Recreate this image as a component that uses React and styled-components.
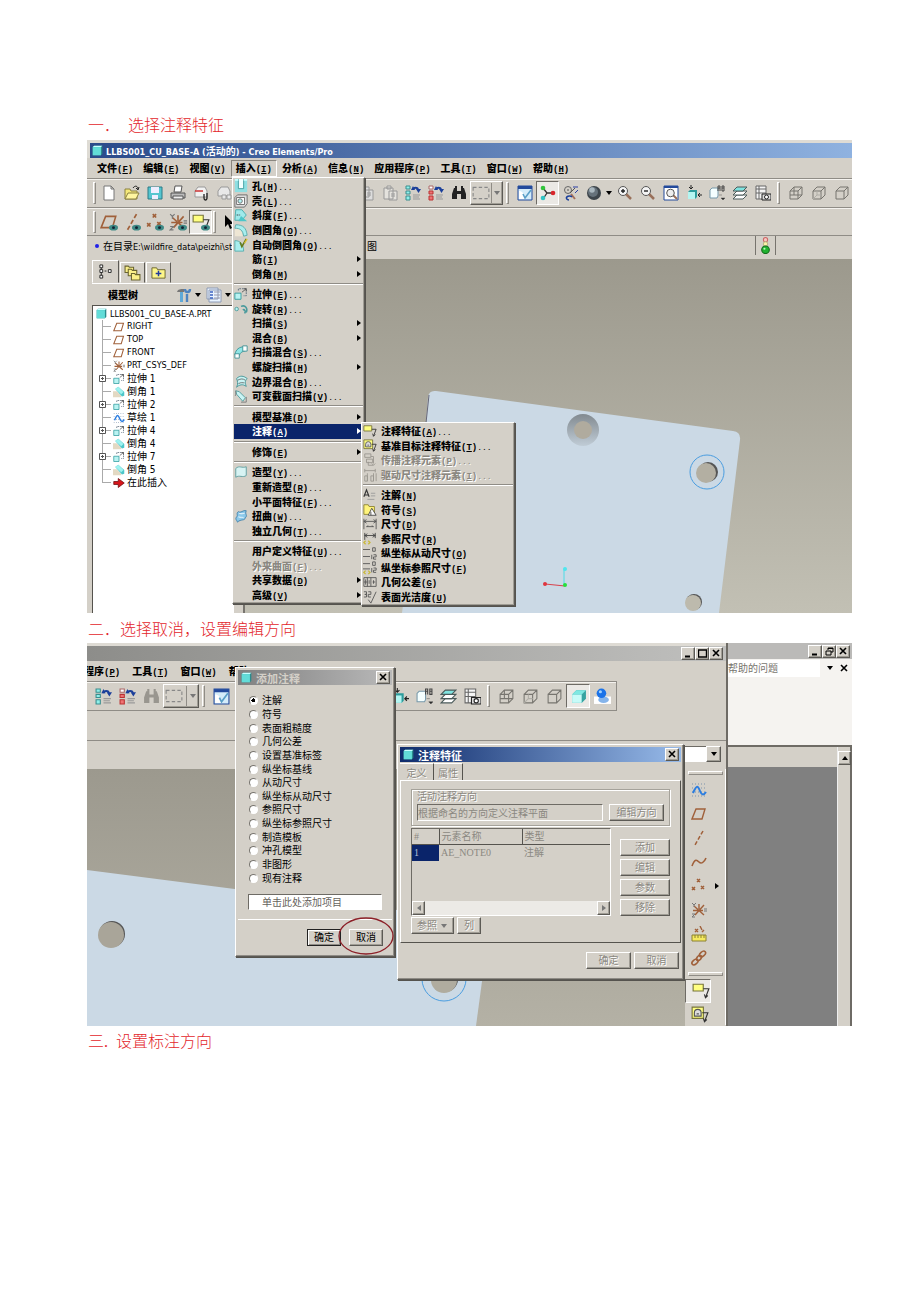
import React, { useState } from "react";
import styled, { createGlobalStyle, css } from "styled-components";

const FACE = "#d4d0c8";
const HAN = '"DejaVu Sans Condensed", "Noto Sans CJK SC", sans-serif';

const GlobalStyle = createGlobalStyle`
  * {
    box-sizing: border-box;
  }

  body {
    margin: 0;
    background: #fff;
    color: #000;
    font-family: ${HAN};
    font-size: 10px;
  }

  button, input, select {
    margin: 0;
    padding: 0;
    border: 0;
    border-radius: 0;
    background: none;
    color: inherit;
    font: inherit;
  }

  svg {
    display: block;
    flex: none;
  }
`;

/* ---------- icons, all on a 16 x 16 grid ---------- */

const brown = "#a0603a";

const box3d = (
  <path d="M2 6h8v8H2zM2 6l4-4h8v8l-4 4M10 6l4-4" fill="none" stroke="#77756f" />
);
const eye = (
  <g>
    <ellipse cx="12" cy="13" rx="4" ry="2.5" fill="#3f8a86" />
    <circle cx="12" cy="13" r="1.3" fill="#123" />
  </g>
);
const plane = <path d="M5 3h9l-3 10H1z" fill="none" stroke={brown} strokeWidth="1.4" />;
const axis = <path d="M12 1L4 15" stroke={brown} strokeWidth="1.5" strokeDasharray="4 2" />;
const points = (
  <path
    d="M6 1l3 3m0-3L6 4M1 9l3 3m0-3l-3 3M10 8l3 3m0-3l-3 3"
    stroke={brown}
    strokeWidth="1.5"
  />
);
const csys = (
  <g fill="none">
    <path d="M3 4l10 9M13 3L4 13M2 8.500h10M8 2v5" stroke={brown} strokeWidth="1.4" />
    <path d="M1 1l2 2 2-2M3 3v2M1 12h3l-3 3h3M13 7h3M13 9h3" stroke="#777" />
  </g>
);
const noteFlag = (
  <g>
    <path d="M1 2h9v6H1z" fill="#ffff80" stroke="#77753a" />
    <path d="M10 6h5l-3 8m-1-3l1 3 2-2" fill="none" stroke="#333" />
  </g>
);
const targetFlag = (
  <g>
    <path d="M1 1h10v10H1z" fill="#ffff80" stroke="#77753a" />
    <path d="M3 6a3 3 0 0 1 6 0v3H3zM5 7h2" fill="#ddd" stroke="#555" />
    <path d="M10 6h5l-3 8m-1-3l1 3 2-2" fill="none" stroke="#333" />
  </g>
);
const lens = (
  <g>
    <path d="M9 9l5 5" stroke="#99705a" strokeWidth="2.5" />
    <circle cx="6" cy="6" r="4.500" fill="#f4f4f4" stroke="#555" />
  </g>
);
const cycle = (
  <g>
    <path d="M8 5c0-3 5-3 5 0" fill="none" stroke="#1b3f9a" strokeWidth="1.8" />
    <path d="M11 4h5l-2.500 4zM6 5h4L8 1z" fill="#1b3f9a" />
    <path d="M8 10h7M8 12h6M8 14h7" stroke="#999" />
  </g>
);
const binoculars = (
  <path d="M3 3h3v3h4V3h3l2 6v5h-5V9H6v5H1V9z M4 1h2v2H4zM10 1h2v2h-2z" />
);
const extrude = (
  <g>
    <path d="M5 4V2h9v8h-3" fill="none" stroke="#567" strokeDasharray="2 1" />
    <path d="M9 6l5-4M11 2h3v3" fill="none" stroke="#555" />
    <path d="M1 7h7v7H1z" fill="#b9f3f2" stroke="#2e9a9c" />
  </g>
);

const ICONS = {
  cube: (
    <g>
      <path d="M1 3l2-2h12v12l-2 2H1z" fill="#2b8b8c" />
      <path d="M1 3h12v12H1z" fill="#62dcd8" />
      <path d="M1 3l2-2h12l-2 2z" fill="#c6ffff" />
    </g>
  ),
  file: <path d="M3 1h7l3 3v11H3zM10 1v3h3" fill="#fff" stroke="#777" />,
  open: (
    <g>
      <path d="M1 4h5l1 2h6v8H1z" fill="#f5e97a" stroke="#8a8040" />
      <path d="M1 14l3-6h11l-3 6z" fill="#fff6a0" stroke="#8a8040" />
      <path d="M9 3c2-3 5-2 5 1m-2-1l2 2 1-3" fill="none" stroke="#222" />
    </g>
  ),
  save: (
    <g>
      <path d="M1 2h14v12H1z" fill="#55c5cf" stroke="#2d7b86" />
      <path d="M4 2h8v6H4zM5 10h6v4H5z" fill="#eef" />
    </g>
  ),
  print: (
    <g stroke="#555">
      <path d="M5 1h7l-1 6H4z" fill="#fff" />
      <path d="M1 8h14v5H1z" fill="#bbb" />
      <path d="M3 11h10v3H3z" fill="#eee" />
    </g>
  ),
  mail: (
    <g>
      <path d="M2 6l3-4h7l2 4v6H2z" fill="#f2f2f2" stroke="#999" />
      <path d="M2 6h8" stroke="#c33" strokeWidth="1.5" />
      <path d="M11 9v4a1.500 2 0 0 0 3 0V8" fill="none" stroke="#222" strokeWidth="1.3" />
    </g>
  ),
  link: (
    <g fill="#e8e8e8" stroke="#999">
      <path d="M2 6l3-4h7l2 4v5H2z" />
      <path d="M6 10h4v4H6zM11 10h4v4h-4z" />
    </g>
  ),
  copy: <path d="M2 2h8v10H2zM6 5h8v10H6zM8 8h4M8 10h4" fill="#ddd" stroke="#999" />,
  paste: <path d="M2 3h9v11H2zM5 1h4v3H5zM7 6h8v9H7zM9 9h4M9 11h4" fill="#e4e2dd" stroke="#999" />,
  regen: (
    <g>
      <path d="M1 1h4v3H1zM1 6h4v3H1zM1 11h4v4H1z" fill="#8ff0ea" stroke="#3b8d8e" />
      {cycle}
    </g>
  ),
  regenRed: (
    <g>
      <path d="M1 1h4v3H1z" fill="#fff" stroke="#a66" />
      <path d="M1 6h4v3H1zM1 11h4v4H1z" fill="#ef7373" stroke="#b33" />
      {cycle}
    </g>
  ),
  find: <g fill="#222">{binoculars}</g>,
  findOff: <g fill="#99968f">{binoculars}</g>,
  select: <path d="M1 3h14v10H1z" fill="none" stroke="#888" strokeDasharray="3 2" />,
  repaint: (
    <g>
      <path d="M1 1h14v14H1z" fill="#d4ecfa" stroke="#234a9c" />
      <path d="M1 1h14v3H1z" fill="#234a9c" />
      <path d="M2 14V6c3 0 5 2 6 8z" fill="#fff" />
      <path d="M6 9l2 4 6-8" fill="none" stroke="#5a9fc8" strokeWidth="1.600" />
    </g>
  ),
  spin: (
    <g>
      <path d="M3 3l4 5 7 0M7 8l-4 6" fill="none" stroke="#333" strokeWidth="1.3" />
      <circle cx="3" cy="3" r="2.300" fill="#32c43c" />
      <circle cx="13" cy="8" r="2.300" fill="#d8262c" />
      <circle cx="3" cy="13" r="2.300" fill="#32c4c4" />
    </g>
  ),
  orient: (
    <g fill="none">
      <circle cx="5" cy="5" r="3.500" stroke="#666" />
      <path d="M4 5h2M7 8l5-5" stroke="#555" />
      <path d="M10 2h5M15 5l-3 3" stroke="#2a3fa5" />
      <path d="M8 9l4 5" stroke="#a5705a" strokeWidth="2" />
      <path d="M9 12a3 2 0 1 0-3 3" stroke="#1b3f9a" strokeWidth="1.600" />
    </g>
  ),
  ball: (
    <g>
      <circle cx="8" cy="8" r="7" fill="#3d454b" />
      <circle cx="7" cy="7" r="5" fill="#66727b" />
      <circle cx="6" cy="5" r="2.800" fill="#a9b7bf" />
    </g>
  ),
  zoomIn: <g>{lens}<path d="M4 6h4M6 4v4" stroke="#222" strokeWidth="1.400" /></g>,
  zoomOut: <g>{lens}<path d="M4 6h4" stroke="#222" strokeWidth="1.400" /></g>,
  refit: (
    <g>
      <path d="M1 1h14v14H1z" fill="#fff" stroke="#234a9c" />
      <path d="M1 1h14v2H1z" fill="#234a9c" />
      <path d="M10 10l4 4" stroke="#99705a" strokeWidth="2" />
      <circle cx="7.500" cy="8" r="3.800" fill="#eee" stroke="#555" />
    </g>
  ),
  view: (
    <g>
      <path d="M2 7l2-2h7v7l-2 2H2z" fill="#2c9c9c" />
      <path d="M2 7h7v7H2z" fill="#b4f5f1" />
      <path d="M5 0v4M3 2l2 2 2-2M16 10h-4M14 8l-2 2 2 2" fill="none" stroke="#222" />
    </g>
  ),
  saved: (
    <g>
      <path d="M1 5l2-2h6v8l-1 2H1z" fill="#f5ffff" stroke="#79a" />
      <path d="M9 6V1h2v5M9 3h2M13 1h2v5h-2zM13 3h2" fill="none" stroke="#444" />
      <path d="M10 10h3M12 13h4l-2 2z" fill="#222" stroke="#555" strokeWidth=".5" />
    </g>
  ),
  layers: (
    <g stroke="#4a5a5a">
      <path d="M1 14l4-4h10l-4 4z" fill="#fff" />
      <path d="M1 10l4-4h10l-4 4z" fill="#fff" />
      <path d="M1 6l4-4h10l-4 4z" fill="#7fe3df" />
    </g>
  ),
  manager: (
    <g>
      <path d="M1 1h10v13H1zM4 1v13M1 4h10M1 8h10" fill="#f4f4f4" stroke="#666" />
      <path d="M7 9h9v6H7z" fill="#ddd" stroke="#222" />
      <circle cx="11.500" cy="12" r="2" fill="#fff" stroke="#222" />
    </g>
  ),
  wire: <g>{box3d}<path d="M6 2v8H2M6 10h8" fill="none" stroke="#77756f" /></g>,
  hidden: <g>{box3d}<path d="M6 6v4l-4 4M6 10h4" fill="none" stroke="#b0aea7" /></g>,
  noHidden: box3d,
  shaded: (
    <g>
      <path d="M2 6l4-4h9v8l-4 4H2z" fill="#36a3a1" />
      <path d="M2 6h9v8H2z" fill="#c7fbf8" />
      <path d="M2 6l4-4h9l-4 4z" fill="#7fe8e2" />
    </g>
  ),
  render: (
    <g>
      <path d="M0 8h16v7H0z" fill="#fff" />
      <ellipse cx="9" cy="11" rx="5" ry="3" fill="#85b4ea" />
      <circle cx="7" cy="5" r="4.500" fill="#1a72e8" />
      <circle cx="6" cy="3.500" r="1.500" fill="#9cd0ff" />
    </g>
  ),
  plane,
  axis,
  points,
  csys,
  planeEye: <g>{plane}{eye}</g>,
  axisEye: <g>{axis}{eye}</g>,
  pointsEye: <g>{points}{eye}</g>,
  csysEye: <g>{csys}{eye}</g>,
  noteEye: <g>{noteFlag}{eye}</g>,
  cursor: <path d="M4 1v12l3-3 2 5 2-1-2-4h4z" fill="#000" />,
  note: noteFlag,
  target: targetFlag,
  light: (
    <g>
      <circle cx="8" cy="2.500" r="2" fill="#f6c6c0" stroke="#c66" />
      <circle cx="8" cy="6.500" r="2" fill="#fff3a8" stroke="#bb8" />
      <circle cx="8" cy="12" r="3.600" fill="#20b230" stroke="#156c1c" />
      <circle cx="7" cy="11" r="1" fill="#b9ffb9" />
    </g>
  ),
  modelTree: <path d="M2 1h3v3H2zM2 6h3v3H2zM2 12h3v3H2zM11 6h3v3h-3zM7 7.500h2M3.500 4v2M3.500 9v3" fill="#fff" stroke="#222" />,
  folders: (
    <g fill="#fbf08a" stroke="#6a6430">
      <path d="M1 2h3l1 1h4v5H1z" />
      <path d="M4 5h3l1 1h4v5H4z" />
      <path d="M7 9h3l1 1h4v5H7z" />
    </g>
  ),
  favorite: (
    <g>
      <path d="M1 3h5l1 2h8v9H1z" fill="#fdf68a" stroke="#6a6430" />
      <path d="M8 6v6M5 9h6" stroke="#223c9c" strokeWidth="1.600" />
    </g>
  ),
  hammer: (
    <g>
      <path d="M1 5c1-3 3-3 7-3v3H5z" fill="#777" />
      <path d="M4 5h3v10H4z" fill="#5fa9d8" />
      <path d="M11 15V7M9 2c0 4 5 4 5 0" fill="none" stroke="#4d83c0" strokeWidth="2.400" />
    </g>
  ),
  list: (
    <g>
      <path d="M1 1h11v11H1zM3 3h12v12H3z" fill="#e9f3ff" stroke="#8c9ab5" />
      <path d="M4 5h3M4 8h3M4 11h3" stroke="#3a62c0" strokeWidth="1.500" />
      <path d="M8 5h6M8 8h6M8 11h6" stroke="#99a" />
    </g>
  ),
  extrude,
  chamfer: (
    <g>
      <path d="M0 15V7h5l6 6v2z" fill="#e3d9c3" />
      <path d="M3 4l4-3 8 7v5l-3 1z" fill="#4cc6c9" />
      <path d="M3 4l4-3 7 7-3 3z" fill="#9ff2ef" />
    </g>
  ),
  sketch: (
    <g fill="none">
      <path d="M1 2h14M1 6h14M1 10h14M1 14h14" stroke="#7d93ab" strokeDasharray="1 2" />
      <path d="M2 11c4-9 5-7 7-2s4 4 6 1" stroke="#2b7de0" strokeWidth="2" />
    </g>
  ),
  insert: <path d="M1 6h6V2l8 6-8 6v-4H1z" fill="#d8161c" stroke="#6d0b0e" />,
  curve: <path d="M1 12c3-8 5-6 7-4s5 1 7-4" fill="none" stroke={brown} strokeWidth="1.600" />,
  ruler: (
    <g>
      <path d="M4 3l3 3m0-3L4 6M9 0l2 4M11 6l2-2" stroke={brown} strokeWidth="1.400" />
      <path d="M1 9h14v6H1zM4 9v3M7 9v3M10 9v3M13 9v3" fill="#f5ea60" stroke="#8a8030" />
    </g>
  ),
  chain: (
    <g fill="none" stroke={brown} strokeWidth="1.600">
      <ellipse cx="11.500" cy="4" rx="3.500" ry="2.200" transform="rotate(-40 11.500 4)" />
      <ellipse cx="8" cy="8" rx="3" ry="2" transform="rotate(-50 8 8)" />
      <ellipse cx="4" cy="12" rx="3.500" ry="2.200" transform="rotate(-40 4 12)" />
    </g>
  ),
  hole: (
    <g>
      <path d="M1 1h14v14H1z" fill="#8fdfe2" />
      <path d="M5 0v11h6V0" fill="#f2ffff" stroke="#3a9a9c" />
      <path d="M1 1h4M11 1h4" fill="none" stroke="#cff" strokeWidth="2" />
    </g>
  ),
  shell: (
    <g stroke="#666">
      <path d="M1 4l3-3h11v10l-3 4H1z" fill="#ddd" />
      <path d="M3 4h9v8H3z" fill="#fff" />
      <circle cx="7" cy="8" r="2.500" fill="#b5eff0" />
    </g>
  ),
  draft: (
    <g>
      <path d="M2 2h7l5 6-5 6H1z" fill="#9fe9ea" stroke="#4aa" />
      <path d="M8 9l7 6H5z" fill="#4cc6c9" />
      <path d="M3 8h4" stroke="#333" strokeDasharray="2 1" />
    </g>
  ),
  round: (
    <g>
      <path d="M1 6c7-1 8 3 9 9H1z" fill="#eee6d4" />
      <path d="M2 2c9 0 12 4 13 12l-4 1C10 8 7 6 1 6z" fill="#a8eeee" stroke="#5aa" />
    </g>
  ),
  autoRound: (
    <g>
      <path d="M1 3c7 0 10 5 10 12H1z" fill="#a8eeee" stroke="#5aa" />
      <path d="M7 5l2 5 5-9" fill="none" stroke="#667a1c" strokeWidth="1.800" />
      <path d="M12 6l3-5" stroke="#e0c030" strokeWidth="1.500" />
    </g>
  ),
  revolve: (
    <g fill="#b9f3f2" stroke="#4a9a9c">
      <circle cx="3" cy="8" r="2" />
      <path d="M8 5c5-2 8 2 6 7M10 9c2-1 4 2 2 4" fill="none" strokeWidth="1.800" />
    </g>
  ),
  sweptBlend: (
    <g stroke="#3a8f92">
      <path d="M1 11c1-6 5-9 11-9l1 5c-4 0-6 2-7 5z" fill="#8fe6e6" />
      <path d="M10 1h5v6h-5zM1 10h5v5H1z" fill="#fff" />
    </g>
  ),
  boundary: (
    <g stroke="#3a8f92">
      <path d="M3 4c4-4 8-3 12 0-3 3-2 6-1 9-4-3-8-2-11 1 2-4 1-7 0-10z" fill="#c9f4f4" />
      <path d="M4 6c4-2 6-2 9 0M5 10c3-2 5-1 7-1" fill="none" stroke="#666" />
    </g>
  ),
  varSweep: (
    <g>
      <path d="M2 2l4 1 7 7-3 4-7-8z" fill="#c9f4f4" stroke="#4a9a9c" />
      <path d="M2 2v5l-1 1M14 9v6H8" fill="none" stroke="#777" />
    </g>
  ),
  style: <path d="M2 4c4-4 7 0 12-2v10c-4 3-8-1-12 2z" fill="#d7f3f3" stroke="#5a9a9c" />,
  warp: (
    <g>
      <path d="M5 3c3 2 5-2 9-1-2 4 2 5-1 8-1 4-5 1-9 5-1-3-3-3-1-6 2-2-1-4 2-6z" fill="#8cc9ea" stroke="#3d7ea8" />
      <path d="M6 5c3 1 4 0 6 0M5 9c3 1 4 0 6 1" stroke="#fff" fill="none" />
    </g>
  ),
  propagate: (
    <path d="M2 1h7v4H2zM4 7h7v4H4zM9 4h3v8M6 10v4h6m-2-2l2 2 2-2" fill="none" stroke="#99968f" />
  ),
  drive: <path d="M2 1v4M14 1v4M2 3h12M2 15V9h3v6zM5 6v9M9 9h3v6H9zM12 6v9M15 6v9" fill="none" stroke="#99968f" />,
  noteText: (
    <g fill="none">
      <path d="M1 10L4 2l3 8M2 8h4" stroke="#333" strokeWidth="1.300" />
      <path d="M9 6h5M9 9h5M5 13h8" stroke="#999" />
    </g>
  ),
  symbol: (
    <g>
      <path d="M1 2h5l1 2h6v9H1z" fill="#fff47c" stroke="#8a8030" />
      <path d="M6 14l4-8 5 8zM9 14v-4" fill="#fff" stroke="#444" />
    </g>
  ),
  dim: <path d="M1 2v12M15 2v12M1 5h14M1 5l3-2M1 5l3 2M15 5l-3-2M15 5l-3 2M4 11h8M4 11l2-1M12 11l-2-1" fill="none" stroke="#555" />,
  refDim: (
    <g fill="none">
      <path d="M2 1v8M14 1v6M2 4h12M2 4l3-2M2 4l3 2M14 4l-3-2M14 4l-3 2" stroke="#444" />
      <path d="M3 10l-2 2 2 2M6 10l2 2-2 2" stroke="#c9b93a" strokeWidth="1.500" />
    </g>
  ),
  ordinate: (
    <path d="M0 4h8M0 12h8M11 2h3v4h-3zM10 10v5M12 10h3v2.500h-3V15h3" fill="none" stroke="#555" />
  ),
  ordRef: (
    <g fill="none">
      <path d="M0 3h8M0 9h8M11 1h3v4h-3zM10 8v5M12 8h3v2.500h-3V13h3" stroke="#555" />
      <path d="M3 11l-2 2 2 2M6 11l2 2-2 2" stroke="#c9b93a" strokeWidth="1.500" />
    </g>
  ),
  gtol: <path d="M1 3h14v10H1zM5 3v10M1 8h4M3 5v6M9 3v10M7 6v4M11 8h3M12 6v4" fill="none" stroke="#555" />,
  finish: (
    <path d="M1 2h3v3H2h2v3H1M6 2h3v3H6v3h3M6 11l3 4 6-13" fill="none" stroke="#555" />
  ),
};

const Icon = ({ name, size = 16 }) => (
  <svg width={size} height={size} viewBox="0 0 16 16" aria-hidden="true">
    {ICONS[name]}
  </svg>
);

const Arrow = ({ to = "down", color = "#000" }) => {
  const shapes = {
    down: "M1 2h6L4 6z",
    up: "M1 6h6L4 2z",
    left: "M6 1v6L2 4z",
    right: "M2 1v6l4-3z",
  };
  return (
    <svg width="8" height="8" viewBox="0 0 8 8" aria-hidden="true">
      <path d={shapes[to]} fill={color} />
    </svg>
  );
};

const CAPTION_SHAPES = {
  close: <path d="M1 1l6 6M7 1L1 7" stroke="#000" strokeWidth="1.600" />,
  min: <path d="M1 7.500h5" stroke="#000" strokeWidth="2" />,
  max: <path d="M0 1h9M.5 1v7h8V1" fill="none" stroke="#000" strokeWidth="1.400" />,
  restore: <path d="M3 3V1h5v4H6M1 4h5v4H1zM3 1.500h5" fill="none" stroke="#000" />,
};

const CaptionButton = ({ kind }) => (
  <StyledCaptionButton type="button" aria-label={kind}>
    <svg width="9" height="9" viewBox="0 0 9 9">{CAPTION_SHAPES[kind]}</svg>
  </StyledCaptionButton>
);

/* ---------- data ---------- */

// [icon, text, accelerator, dots, submenu, state]
const INSERT_MENU = [
  ["hole", "孔", "H", true],
  ["shell", "壳", "L", true],
  ["draft", "斜度", "F", true],
  ["round", "倒圆角", "O", true],
  ["autoRound", "自动倒圆角", "O", true],
  [null, "筋", "I", false, true],
  [null, "倒角", "M", false, true],
  null,
  ["extrude", "拉伸", "E", true],
  ["revolve", "旋转", "R", true],
  [null, "扫描", "S", false, true],
  [null, "混合", "B", false, true],
  ["sweptBlend", "扫描混合", "S", true],
  [null, "螺旋扫描", "H", false, true],
  ["boundary", "边界混合", "B", true],
  ["varSweep", "可变截面扫描", "V", true],
  null,
  [null, "模型基准", "D", false, true],
  [null, "注释", "A", false, true, "active"],
  null,
  [null, "修饰", "E", false, true],
  null,
  ["style", "造型", "Y", true],
  [null, "重新造型", "R", true],
  [null, "小平面特征", "F", true],
  ["warp", "扭曲", "W", true],
  [null, "独立几何", "T", true],
  null,
  [null, "用户定义特征", "U", true],
  [null, "外来曲面", "F", true, false, "disabled"],
  [null, "共享数据", "D", false, true],
  [null, "高级", "V", false, true],
];

const NOTE_MENU = [
  ["note", "注释特征", "A", true],
  ["target", "基准目标注释特征", "T", true],
  ["propagate", "传播注释元素", "P", true, false, "disabled"],
  ["drive", "驱动尺寸注释元素", "I", true, false, "disabled"],
  null,
  ["noteText", "注解", "N"],
  ["symbol", "符号", "S"],
  ["dim", "尺寸", "D"],
  ["refDim", "参照尺寸", "R"],
  ["ordinate", "纵坐标从动尺寸", "O"],
  ["ordRef", "纵坐标参照尺寸", "F"],
  ["gtol", "几何公差", "G"],
  ["finish", "表面光洁度", "U"],
];

const MENU_BAR = [
  ["文件", "F"],
  ["编辑", "E"],
  ["视图", "V"],
  ["插入", "I"],
  ["分析", "A"],
  ["信息", "N"],
  ["应用程序", "P"],
  ["工具", "T"],
  ["窗口", "W"],
  ["帮助", "H"],
];

const TREE = [
  ["plane", "RIGHT"],
  ["plane", "TOP"],
  ["plane", "FRONT"],
  ["csys", "PRT_CSYS_DEF"],
  ["extrude", "拉伸 1", true],
  ["chamfer", "倒角 1"],
  ["extrude", "拉伸 2", true],
  ["sketch", "草绘 1"],
  ["extrude", "拉伸 4", true],
  ["chamfer", "倒角 4"],
  ["extrude", "拉伸 7", true],
  ["chamfer", "倒角 5"],
  ["insert", "在此插入"],
];

const NOTE_TYPES = [
  "注解", "符号", "表面粗糙度", "几何公差", "设置基准标签", "纵坐标基线", "从动尺寸",
  "纵坐标从动尺寸", "参照尺寸", "纵坐标参照尺寸", "制造模板", "冲孔模型", "非图形", "现有注释",
];

const SIDE_TOOLS = ["sketch", "plane", "axis", "curve", "points", "csys", "ruler", "chain"];

/* ---------- shared parts ---------- */

const MenuLabel = ({ text, accel, dots }) => (
  <StyledLabel>
    {text}
    <span className="accel">(<u>{accel}</u>)</span>
    {dots && <span className="dots">...</span>}
  </StyledLabel>
);

const PopupMenu = ({ items }) =>
  items.map((item, i) => {
    if (!item) return <MenuRule key={i} />;
    const [icon, text, accel, dots, sub, state] = item;
    return (
      <MenuItem key={i} role="menuitem" $active={state === "active"} $disabled={state === "disabled"}>
        <span>{icon && <Icon name={icon} size={14} />}</span>
        <MenuLabel text={text} accel={accel} dots={dots} />
        {sub && <Arrow to="right" color={state === "active" ? "#fff" : "#000"} />}
      </MenuItem>
    );
  });

const Tools = ({ names, pressed, size }) =>
  names.map((name, i) => (
    <ToolButton key={name + i} aria-label={name} $pressed={name === pressed}>
      <Icon name={name} size={size} />
    </ToolButton>
  ));

const SelectTool = () => (
  <SplitButton aria-label="select">
    <Icon name="select" size={18} />
    <i />
    <Arrow color="#777" />
  </SplitButton>
);

const MainWindow = () => (
  <Figure>
    <TitleBar>
      <Icon name="cube" size={11} />
      <span>LLBS001_CU_BASE-A (<Han>活动的</Han>) - Creo Elements/Pro</span>
    </TitleBar>
    <MenuBar>
      {MENU_BAR.map(([text, accel]) => (
        <MenuBarItem key={text} $open={text === "插入"}>
          <MenuLabel text={text} accel={accel} />
        </MenuBarItem>
      ))}
    </MenuBar>
    <Toolbar $height={29}>
      <Grip />
      <Tools names={["file", "open", "save", "print", "mail", "link"]} />
      <Grip />
      <Tools names={["link", "mail", "copy", "copy", "copy", "copy", "paste", "regen", "regenRed", "find"]} />
      <SelectTool />
      <Grip $wide />
      <Tools names={["repaint", "spin", "orient", "ball"]} pressed="spin" />
      <Arrow />
      <Tools names={["zoomIn", "zoomOut", "refit", "view", "saved", "layers", "manager"]} />
      <Grip $wide />
      <Tools names={["wire", "hidden", "noHidden"]} />
    </Toolbar>
    <Toolbar $height={28}>
      <Grip />
      <Tools names={["planeEye", "axisEye", "pointsEye", "csysEye", "noteEye"]} pressed="noteEye" size={18} />
      <Grip />
      <Tools names={["cursor"]} />
    </Toolbar>
    <StatusBar>
      <Bullet />
      <StatusText>在目录<small>E:\wildfire_data\peizhi\start</small></StatusText>
      <StatusTail>图</StatusTail>
      <StatusLight><Icon name="light" size={17} /></StatusLight>
    </StatusBar>
    <WindowBody>
      <TreePanel>
        <TreeTabs>
          <TreeTab $active aria-label="model tree"><Icon name="modelTree" size={15} /></TreeTab>
          <TreeTab aria-label="folders"><Icon name="folders" size={17} /></TreeTab>
          <TreeTab aria-label="favorites"><Icon name="favorite" size={15} /></TreeTab>
        </TreeTabs>
        <TreeHeader>
          <b>模型树</b>
          <Icon name="hammer" />
          <Arrow />
          <Icon name="list" />
          <Arrow />
        </TreeHeader>
        <Tree>
          <TreeRoot><Icon name="cube" size={11} />LLBS001_CU_BASE-A.PRT</TreeRoot>
          {TREE.map(([icon, text, branch]) => (
            <TreeRow key={text} $han={/[^\x00-\x7f]/.test(text)}>
              <TreeLine>{branch && <Expander viewBox="0 0 7 7"><path d="M.5.5h6v6h-6zM2 3.500h3M3.500 2v3" fill="#fff" stroke="#555" /></Expander>}</TreeLine>
              <Icon name={icon} size={12} />
              {text}
            </TreeRow>
          ))}
        </Tree>
      </TreePanel>
      <Viewport>
        <svg width="100%" height="354" viewBox="245 259 607 354" preserveAspectRatio="xMinYMin slice">
          <defs>
            <linearGradient id="bore" x1="0" y1="0" x2="0" y2="1">
              <stop offset="0" stopColor="#828a90" />
              <stop offset="1" stopColor="#c0ccd6" />
            </linearGradient>
          </defs>
          <path d="M426 423l2-26q1-7 8-6l297 40q8 1 7 9l-21 173H402z" fill="#cbd9e5" />
          <path d="M426 423l3-28" stroke="#667" fill="none" />
          <circle cx="583" cy="430" r="16" fill="url(#bore)" />
          <circle cx="583" cy="430" r="9" fill="#b0ab9e" />
          <circle cx="707" cy="472" r="17" fill="none" stroke="#4a9de0" />
          <circle cx="708" cy="472" r="10" fill="#555" />
          <circle cx="706" cy="473" r="10" fill="#b3afa2" />
          <circle cx="694" cy="602" r="8" fill="#555" />
          <circle cx="693" cy="603" r="8" fill="#bdbaad" />
          <path d="M545 584l20 2" stroke="#d8424c" />
          <path d="M564 585v-16" stroke="#4fdce6" />
          <circle cx="545" cy="584" r="2" fill="#e0353e" />
          <circle cx="565" cy="569" r="2" fill="#4fe6ee" />
          <circle cx="565" cy="585" r="2" fill="#26e03c" />
        </svg>
      </Viewport>
    </WindowBody>
    <InsertPopup role="menu"><PopupMenu items={INSERT_MENU} /></InsertPopup>
    <NotePopup role="menu"><PopupMenu items={NOTE_MENU} /></NotePopup>
  </Figure>
);

const AddNoteDialog = () => {
  const [type, setType] = useState("注解");

  return (
    <AddDialog>
      <DialogTitle $inactive>
        <Icon name="cube" size={11} />
        <span>添加注释</span>
        <CaptionButton kind="close" />
      </DialogTitle>
      <RadioList>
        {NOTE_TYPES.map((name) => (
          <RadioLabel key={name}>
            <Radio type="radio" name="type" checked={type === name} onChange={() => setType(name)} />
            {name}
          </RadioLabel>
        ))}
      </RadioList>
      <AddInput aria-label="添加项目" placeholder="单击此处添加项目" />
      <AddFooter>
        <PushButton $width={34} $default>确定</PushButton>
        <PushButton $width={34}>取消</PushButton>
      </AddFooter>
      <RedRing viewBox="0 0 56 38">
        <ellipse cx="28" cy="19" rx="27" ry="18" fill="none" stroke="#8c2028" strokeWidth="1.300" />
      </RedRing>
    </AddDialog>
  );
};

const FeatureDialog = () => (
  <FeatureBox>
    <DialogTitle>
      <Icon name="cube" size={11} />
      <span>注释特征</span>
      <CaptionButton kind="close" />
    </DialogTitle>
    <DialogTabs>
      <DialogTab $active>定义</DialogTab>
      <DialogTab>属性</DialogTab>
    </DialogTabs>
    <DialogPanel>
      <GroupBox>
        <label htmlFor="direction">活动注释方向</label>
        <div>
          <DirectionInput id="direction" defaultValue="根据命名的方向定义注释平面" />
          <PushButton $width={55} $dim>编辑方向</PushButton>
        </div>
      </GroupBox>
      <PanelSplit>
        <TableFrame>
          <ElementTable>
            <thead>
              <tr><th>#</th><th>元素名称</th><th>类型</th></tr>
            </thead>
            <tbody>
              <tr><td>1</td><td>AE_NOTE0</td><td>注解</td></tr>
            </tbody>
          </ElementTable>
          <ScrollRow>
            <ScrollButton aria-label="left"><Arrow to="left" color="#777" /></ScrollButton>
            <ScrollButton aria-label="right"><Arrow to="right" color="#777" /></ScrollButton>
          </ScrollRow>
        </TableFrame>
        <SideButtons>
          {["添加", "编辑", "参数", "移除"].map((name) => (
            <PushButton key={name} $width={50} $dim>{name}</PushButton>
          ))}
        </SideButtons>
      </PanelSplit>
      <TableTools>
        <PushButton $width={43} $dim>参照<Arrow color="#777" /></PushButton>
        <PushButton $width={24} $dim>列</PushButton>
      </TableTools>
    </DialogPanel>
    <FeatureFooter>
      <PushButton $width={45} $dim>确定</PushButton>
      <PushButton $width={45} $dim>取消</PushButton>
    </FeatureFooter>
  </FeatureBox>
);

const EditWindow = () => (
  <Figure $split>
    <FrontWindow>
      <TitleBar $inactive>
        <CaptionGroup>
          <CaptionButton kind="min" />
          <CaptionButton kind="max" />
          <CaptionButton kind="close" />
        </CaptionGroup>
      </TitleBar>
      <MenuBar $clipped>
        {[["程序", "P"], ["工具", "T"], ["窗口", "W"], ["帮助", "H"]].map(([text, accel]) => (
          <MenuBarItem key={text} $loose><MenuLabel text={text} accel={accel} /></MenuBarItem>
        ))}
      </MenuBar>
      <LooseToolbar>
        <Sliver />
        <Tools names={["regen", "regenRed", "findOff"]} size={17} />
        <SelectTool />
        <Grip $wide />
        <Tools names={["repaint", "spin", "orient", "ball", "zoomIn", "zoomOut", "refit"]} size={17} />
        <Sliver $wide />
        <Tools names={["view", "saved", "layers", "manager"]} size={17} />
        <Grip $wide />
        <Tools names={["wire", "hidden", "noHidden", "shaded", "render"]} pressed="shaded" size={17} />
      </LooseToolbar>
      <EmptyRow />
      <FilterRow>
        <FilterSelect aria-label="filter"><option></option></FilterSelect>
        <FilterArrow><Arrow /></FilterArrow>
      </FilterRow>
      <FrontBody>
        <Viewport $second>
          <svg width="100%" height="257" viewBox="87 769 598 257" preserveAspectRatio="xMinYMin slice">
            <path d="M87 870l403 52-14 104H87z" fill="#cbd9e5" />
            <circle cx="112" cy="934" r="13" fill="#555" />
            <circle cx="111" cy="935" r="13" fill="#a9a599" />
            <circle cx="444" cy="979" r="22" fill="none" stroke="#4a9de0" />
            <circle cx="445" cy="979" r="13" fill="#555" />
            <circle cx="444" cy="980" r="13" fill="#b0ac9f" />
          </svg>
        </Viewport>
        <SideBar>
          <SideGrip />
          {SIDE_TOOLS.map((name) => (
            <SideTool key={name} aria-label={name}>
              <Icon name={name} />
              {name === "points" && <Arrow to="right" />}
            </SideTool>
          ))}
          <SideGrip />
          <SideTool $pressed aria-label="note"><Icon name="note" size={18} /></SideTool>
          <SideTool aria-label="target"><Icon name="target" size={18} /></SideTool>
        </SideBar>
      </FrontBody>
    </FrontWindow>
    <BackWindow>
      <BackTitle>
        <CaptionButton kind="min" />
        <CaptionButton kind="restore" />
        <CaptionButton kind="close" />
      </BackTitle>
      <HelpRow>
        <HelpInput aria-label="help" placeholder="帮助的问题" />
        <Arrow />
        <svg width="9" height="9" viewBox="0 0 9 9">{CAPTION_SHAPES.close}</svg>
      </HelpRow>
      <BackPaper />
      <BackBody>
        <BackDocument />
        <BackScroll>
          <ScrollButton aria-label="up"><Arrow to="up" /></ScrollButton>
        </BackScroll>
      </BackBody>
    </BackWindow>
    <AddNoteDialog />
    <FeatureDialog />
  </Figure>
);

const App = () => (
  <Page>
    <GlobalStyle />
    <Heading $height={32}>一．&nbsp;&nbsp;选择注释特征</Heading>
    <MainWindow />
    <Heading $height={30}>二．选择取消，设置编辑方向</Heading>
    <EditWindow />
    <Heading $height={28}>三.&nbsp;&nbsp;设置标注方向</Heading>
  </Page>
);

/* ---------- styles ---------- */

const raised = css`
  background: ${FACE};
  border: 1px solid;
  border-color: #fff #5c5a55 #5c5a55 #fff;
  box-shadow: inset -1px -1px 0 #a09d95;
`;

const sunken = css`
  border: 1px solid;
  border-color: #6e6b65 #fff #fff #6e6b65;
`;

const Page = styled.main`
  padding: 108px 68px 40px 87px;
`;

const Heading = styled.h2`
  margin: 0;
  padding-left: 1px;
  height: ${({ $height }) => $height}px;
  line-height: ${({ $height }) => $height + 4}px;
  font-family: "Liberation Serif", "Noto Sans CJK SC", serif;
  font-size: 16px;
  font-weight: 300;
  color: #e3262b;
`;

const Figure = styled.section`
  position: relative;
  display: ${({ $split }) => ($split ? "flex" : "block")};
  overflow: hidden;
  background: ${FACE};
`;

const Han = styled.span`
  font-size: 10px;
`;

const TitleBar = styled.header`
  display: flex;
  align-items: center;
  gap: 3px;
  height: 18px;
  padding-left: 2px;
  border-top: 3px solid #dedbd4;
  border-left: ${({ $inactive }) => ($inactive ? 0 : 3)}px solid #dedbd4;
  background: ${({ $inactive }) =>
    $inactive ? "linear-gradient(90deg, #8d8d8a, #c0c0be)" : "linear-gradient(90deg, #2a4a8a, #8fb2e0)"};
  color: #fff;
  font-size: 9px;
  font-weight: bold;
  white-space: nowrap;
`;

const StyledCaptionButton = styled.button`
  ${raised}
  display: flex;
  align-items: center;
  justify-content: center;
  width: 14px;
  height: 13px;
`;

const CaptionGroup = styled.div`
  display: flex;
  margin-left: auto;
  margin-right: 3px;
`;

const MenuBar = styled.nav`
  display: flex;
  align-items: center;
  height: 20px;
  margin-left: ${({ $clipped }) => ($clipped ? -9 : 5)}px;
`;

const MenuBarItem = styled.button`
  flex: none;
  height: 17px;
  padding: 0 ${({ $loose }) => ($loose ? 5 : 4)}px;
  border: 1px solid;
  border-color: ${({ $open }) => ($open ? "#8a8780 #fff #fff #8a8780" : "transparent")};
`;

const StyledLabel = styled.span`
  display: block;
  height: 14px;
  font: 900 10px/14px "Noto Sans CJK SC", sans-serif;
  white-space: nowrap;

  .accel,
  .dots {
    font-family: "Liberation Mono", monospace;
    font-size: 9px;
    line-height: 1px;
  }

  .dots {
    font-size: 8px;
    font-weight: normal;
  }
`;

const Toolbar = styled.div`
  display: flex;
  align-items: center;
  height: ${({ $height }) => $height}px;
  padding-left: 5px;
  overflow: hidden;
  border-top: 1px solid #8f8c86;
  box-shadow: inset 0 1px 0 #f4f2ee;
`;

const SplitButton = styled.button`
  ${raised}
  display: flex;
  align-items: center;
  justify-content: space-between;
  flex: none;
  width: 33px;
  height: 24px;
  padding: 0 1px;

  i {
    width: 1px;
    height: 20px;
    background: #8f8c86;
  }
`;

const LooseToolbar = styled(Toolbar)`
  width: 530px;
  height: 30px;
  padding-left: 0;
  border: solid #8f8c86;
  border-width: 1px 1px 1px 0;

  > button {
    width: 24px;
  }

  > ${SplitButton} {
    width: 36px;
  }
`;

const Sliver = styled.i`
  flex: none;
  width: ${({ $wide }) => ($wide ? 11 : 4)}px;
`;

const Grip = styled.i`
  flex: none;
  width: 3px;
  height: 22px;
  margin: ${({ $wide }) => ($wide ? "0 4px 0 3px" : "0 1px")};
  border: 1px solid;
  border-color: #fff #8f8c86 #8f8c86 #fff;
`;

const ToolButton = styled.button`
  display: flex;
  align-items: center;
  justify-content: center;
  flex: none;
  width: 23px;
  height: 24px;
  ${({ $pressed }) => $pressed && css`
    ${sunken}
    background: #ebe9e5;
  `}
`;

const StatusBar = styled.div`
  display: flex;
  align-items: center;
  height: 24px;
  padding: 0 76px 4px 8px;
  border-top: 1px solid #8f8c86;
`;

const Bullet = styled.i`
  width: 4px;
  height: 4px;
  margin-right: 4px;
  border-radius: 50%;
  background: #2020e8;
`;

const StatusText = styled.span`
  width: 264px;
  white-space: nowrap;

  small {
    font-size: 9px;
  }
`;

const StatusTail = styled.span`
  flex: 1;
`;

const StatusLight = styled.span`
  padding: 1px;
  border: solid #77746e;
  border-width: 0 1px;
`;

const WindowBody = styled.div`
  display: flex;
  align-items: stretch;
`;

const TreePanel = styled.aside`
  display: flex;
  flex-direction: column;
  flex: none;
  width: 158px;
  padding: 1px 9px 0 5px;
  border-right: 2px solid #77746e;
`;

const TreeTabs = styled.div`
  display: flex;
  align-items: flex-end;
  gap: 1px;
  border-bottom: 1px solid #fff;
`;

const TreeTab = styled.button`
  display: flex;
  align-items: center;
  justify-content: center;
  width: ${({ $active }) => ($active ? 27 : 25)}px;
  height: ${({ $active }) => ($active ? 23 : 21)}px;
  border: 1px solid;
  border-color: #fff #5c5a55 transparent #fff;
`;

const TreeHeader = styled.div`
  display: flex;
  align-items: center;
  gap: 2px;
  height: 21px;
  padding-left: 16px;

  b {
    width: 66px;
    font-weight: 900;
  }

  svg:nth-of-type(3) {
    margin-left: 2px;
  }
`;

const Tree = styled.div`
  flex: 1;
  padding-top: 1px;
  border-top: 1px solid #55534e;
  border-left: 1px solid #55534e;
  background: #fff;
`;

const TreeRoot = styled.div`
  display: flex;
  align-items: center;
  gap: 3px;
  height: 13px;
  padding-left: 3px;
  font-size: 9px;
`;

const TreeRow = styled.div`
  display: flex;
  align-items: center;
  gap: 2px;
  height: 13px;
  padding-left: 5px;
  font-size: ${({ $han }) => ($han ? 10 : 9)}px;
  line-height: 13px;
`;

const TreeLine = styled.i`
  display: flex;
  align-items: center;
  width: 13px;
  height: 13px;
  background:
    linear-gradient(#aaa, #aaa) 4px 0 / 1px 13px no-repeat,
    linear-gradient(#aaa, #aaa) 4px 6px / 9px 1px no-repeat;

  ${TreeRow}:last-child & {
    background:
      linear-gradient(#aaa, #aaa) 4px 0 / 1px 6px no-repeat,
      linear-gradient(#aaa, #aaa) 4px 6px / 9px 1px no-repeat;
  }
`;

const Expander = styled.svg`
  width: 7px;
  height: 7px;
  margin-left: 1px;
`;

const Viewport = styled.div`
  flex: 1;
  min-width: 0;
  overflow: hidden;
  background: ${({ $second }) =>
    $second ? "linear-gradient(#9c998e, #b4b1a5)" : "linear-gradient(#9c998d, #c2c0b4)"};
`;

const popup = css`
  ${raised}
  position: absolute;
  display: flex;
  flex-direction: column;
  padding: 1px;
  box-shadow: inset -1px -1px 0 #a09d95, 1px 1px 0 #55534e;
`;

const InsertPopup = styled.div`
  ${popup}
  top: 37px;
  left: 145px;
  width: 133px;
  min-height: 427px;
`;

const NotePopup = styled.div`
  ${popup}
  top: 282px;
  left: 274px;
  width: 154px;
  min-height: 184px;
`;

const MenuItem = styled.button`
  display: grid;
  grid-template-columns: 14px 1fr auto;
  align-items: center;
  column-gap: 4px;
  flex: 1 1 14px;
  text-align: left;
  background: ${({ $active }) => ($active ? "#0a246a" : "transparent")};
  color: ${({ $active, $disabled }) => ($active ? "#fff" : $disabled ? "#8b8881" : "#000")};
  text-shadow: ${({ $disabled }) => ($disabled ? "1px 1px 0 #fff" : "none")};
`;

const MenuRule = styled.hr`
  flex: none;
  width: 100%;
  height: 2px;
  margin: 2px 0;
  border: 0;
  border-top: 1px solid #8f8c86;
  border-bottom: 1px solid #fff;
`;

const FrontWindow = styled.div`
  display: flex;
  flex-direction: column;
  flex: 1;
  min-width: 0;
  border-right: 2px solid #6e6b65;
`;

const EmptyRow = styled.div`
  height: 29px;
  margin-top: 1px;
  border-bottom: 1px solid #8f8c86;
`;

const FilterRow = styled.div`
  display: flex;
  justify-content: flex-end;
  height: 28px;
  padding: 5px 5px 7px;
`;

const FilterSelect = styled.select`
  width: 200px;
  height: 16px;
  ${sunken}
  border-right: 0;
  appearance: none;
  background: #fff;
`;

const FilterArrow = styled.span`
  ${raised}
  display: flex;
  align-items: center;
  justify-content: center;
  width: 15px;
  height: 16px;
`;

const FrontBody = styled.div`
  display: flex;
  flex: 1;
`;

const SideBar = styled.div`
  width: 41px;
  height: 256px;
  overflow: hidden;
  border-right: 1px solid #fff;
`;

const SideGrip = styled.i`
  display: block;
  height: 4px;
  margin: 2px 2px 3px 3px;
  border: 1px solid;
  border-color: #fff #8f8c86 #8f8c86 #fff;
`;

const SideTool = styled.button`
  display: flex;
  align-items: center;
  gap: 6px;
  width: 26px;
  height: 24px;
  padding-left: 6px;
  ${({ $pressed }) => $pressed && css`
    ${sunken}
    background: #ebe9e5;
  `}
`;

const BackWindow = styled.div`
  display: flex;
  flex-direction: column;
  flex: none;
  width: 124px;
`;

const BackTitle = styled.div`
  display: flex;
  align-items: center;
  justify-content: flex-end;
  height: 16px;
  padding-right: 2px;
  background: #bbbab8;
`;

const HelpRow = styled.div`
  display: flex;
  align-items: center;
  gap: 6px;
  height: 18px;
  padding-right: 3px;
  background: #f5f3f0;
`;

const HelpInput = styled.input`
  flex: 1;
  min-width: 0;
  height: 17px;
  background: #fff;

  &::placeholder {
    color: #77746e;
    opacity: 1;
  }
`;

const BackPaper = styled.div`
  height: 70px;
  background: #f5f3f0;
  border-bottom: 2px solid #6e6b65;
`;

const BackBody = styled.div`
  display: flex;
  flex: 1;
`;

const BackDocument = styled.div`
  flex: 1;
  border-top: 20px solid ${FACE};
  background: #808080;
`;

const BackScroll = styled.div`
  width: 15px;
  padding-top: 4px;
  border-right: 2px solid #6e6b65;
  border-left: 1px solid #eee;
`;

const dialog = css`
  ${raised}
  position: absolute;
  display: flex;
  flex-direction: column;
  padding: 2px;
  box-shadow: inset -1px -1px 0 #8f8c86, 1px 1px 0 #55534e;
`;

const AddDialog = styled.form`
  ${dialog}
  top: 24px;
  left: 148px;
  width: 160px;
`;

const DialogTitle = styled.header`
  display: flex;
  align-items: center;
  gap: 4px;
  height: 15px;
  padding: 0 2px 0 3px;
  background: ${({ $inactive }) =>
    $inactive ? "linear-gradient(90deg, #808080, #b9b9b9)" : "linear-gradient(90deg, #0f2c6c, #97bae9)"};
  color: ${({ $inactive }) => ($inactive ? FACE : "#fff")};
  font-size: 11px;
  font-weight: bold;

  span {
    flex: 1;
  }
`;

const RadioList = styled.div`
  display: flex;
  flex-direction: column;
  min-height: 200px;
  padding: 9px 0 0 11px;
`;

const RadioLabel = styled.label`
  display: flex;
  align-items: center;
  gap: 4px;
  flex: 1 1 13px;
  line-height: 13px;
`;

const Radio = styled.input`
  appearance: none;
  width: 9px;
  height: 9px;
  border: 1px solid;
  border-color: #77746e #fff #fff #77746e;
  border-radius: 50%;
  background: #fff;

  &:checked {
    background: radial-gradient(#000 0 2px, #fff 2px);
  }
`;

const AddInput = styled.input`
  ${sunken}
  height: 16px;
  margin: 9px 10px 0;
  padding-left: 13px;
  background: #fff;

  &::placeholder {
    color: #66635d;
    opacity: 1;
  }
`;

const AddFooter = styled.div`
  display: flex;
  justify-content: flex-end;
  gap: 8px;
  margin-top: 9px;
  padding: 9px 9px 8px;
  border-top: 1px solid #fff;
`;

const PushButton = styled.button.attrs({ type: "button" })`
  ${raised}
  display: flex;
  align-items: center;
  justify-content: center;
  gap: 3px;
  width: ${({ $width }) => $width}px;
  height: 17px;
  line-height: 14px;
  color: ${({ $dim }) => ($dim ? "#8b8881" : "#000")};
  text-shadow: ${({ $dim }) => ($dim ? "1px 1px 0 #fff" : "none")};
  ${({ $default }) => $default && css`
    border-color: #222;
    box-shadow: inset 1px 1px 0 #fff, inset -1px -1px 0 #8f8c86;
  `}
`;

const RedRing = styled.svg`
  position: absolute;
  right: 0;
  bottom: 1px;
  width: 56px;
  height: 38px;
  pointer-events: none;
`;

const FeatureBox = styled.form`
  ${dialog}
  top: 101px;
  left: 310px;
  width: 287px;
  color: #8b8881;
`;

const DialogTabs = styled.div`
  display: flex;
  height: 17px;
  margin-top: 1px;
`;

const DialogTab = styled.button.attrs({ type: "button" })`
  width: ${({ $active }) => ($active ? 34 : 29)}px;
  border: solid;
  border-width: 1px 1px 0 0;
  border-color: #fff #55534e;
  text-shadow: 1px 1px 0 #fff;
`;

const DialogPanel = styled.div`
  padding: 8px 10px;
  border: 1px solid;
  border-color: #fff #55534e #55534e #fff;
`;

const GroupBox = styled.div`
  padding: 0 5px 4px;
  border: 1px solid #a5a29a;
  box-shadow: 1px 1px 0 #fff, inset 1px 1px 0 #fff;

  label {
    display: block;
    height: 14px;
    line-height: 14px;
    text-shadow: 1px 1px 0 #fff;
  }

  div {
    display: flex;
    gap: 6px;
  }
`;

const DirectionInput = styled.input`
  ${sunken}
  flex: 1;
  min-width: 0;
  height: 17px;
`;

const PanelSplit = styled.div`
  display: flex;
  gap: 9px;
  margin-top: 2px;
`;

const TableFrame = styled.div`
  ${sunken}
  display: flex;
  flex-direction: column;
  flex: 1;
  justify-content: space-between;
`;

const ElementTable = styled.table`
  width: 100%;
  border-collapse: collapse;
  table-layout: fixed;
  font-family: "Liberation Serif", "Noto Sans CJK SC", serif;

  th,
  td {
    height: 15px;
    padding: 0 2px;
    line-height: 13px;
    text-align: left;
    font-weight: normal;
  }

  th {
    border-right: 1px solid #55534e;
    border-bottom: 1px solid #55534e;
  }

  th:last-child {
    border-right: 0;
  }

  th:first-child {
    width: 27px;
  }

  th:nth-child(2) {
    width: 83px;
  }

  td {
    height: 17px;
  }

  td:first-child {
    background: #0a246a;
    color: #b8c0d8;
  }
`;

const ScrollRow = styled.div`
  display: flex;
  justify-content: space-between;
  background: #eceae6;
`;

const ScrollButton = styled.button.attrs({ type: "button" })`
  ${raised}
  display: flex;
  align-items: center;
  justify-content: center;
  width: 13px;
  height: 14px;
`;

const SideButtons = styled.div`
  display: flex;
  flex-direction: column;
  gap: 3px;
  padding-top: 11px;
`;

const TableTools = styled.div`
  display: flex;
  gap: 3px;
  margin-top: 1px;
`;

const FeatureFooter = styled.div`
  display: flex;
  justify-content: flex-end;
  gap: 3px;
  padding: 9px 2px 8px;
`;

export default App;
